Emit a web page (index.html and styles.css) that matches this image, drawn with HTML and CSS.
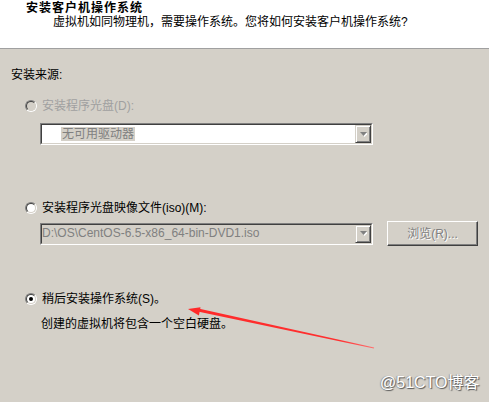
FILE: index.html
```html
<!DOCTYPE html>
<html>
<head>
<meta charset="utf-8">
<link rel="stylesheet" href="styles.css">
</head>
<body>
<div class="page">
  <div class="header">
    <div class="title">安装客户机操作系统</div>
    <div class="subtitle">虚拟机如同物理机，需要操作系统。您将如何安装客户机操作系统?</div>
  </div>
  <div class="content">
    <div class="section-label">安装来源:</div>
    <div class="options">
      <div class="row row1">
        <span class="radio"><span class="radio-inner disabled"></span></span>
        <span class="label disabled-text">安装程序光盘(D):</span>
      </div>
      <div class="combo-row combo-row1">
        <div class="combo">
          <div class="combo-in">
            <div class="combo-text"><span class="sel">无可用驱动器</span></div>
            <div class="combo-btn">
              <svg width="7" height="5" viewBox="0 0 7 5"><polygon points="1,1 8,1 4.5,5" fill="#fff"/><polygon points="0,0 7,0 3.5,4" fill="#808080"/></svg>
            </div>
          </div>
        </div>
      </div>
      <div class="row row2">
        <span class="radio"><span class="radio-inner"></span></span>
        <span class="label">安装程序光盘映像文件(iso)(M):</span>
      </div>
      <div class="combo-row combo-row2">
        <div class="combo">
          <div class="combo-in off">
            <div class="combo-text path">D:\OS\CentOS-6.5-x86_64-bin-DVD1.iso</div>
            <div class="combo-btn">
              <svg width="7" height="5" viewBox="0 0 7 5"><polygon points="1,1 8,1 4.5,5" fill="#fff"/><polygon points="0,0 7,0 3.5,4" fill="#808080"/></svg>
            </div>
          </div>
        </div>
        <div class="browse">浏览(R)...</div>
      </div>
      <div class="row row3">
        <span class="radio"><span class="radio-inner"><span class="dot"></span></span></span>
        <span class="label">稍后安装操作系统(S)。</span>
      </div>
      <div class="desc">创建的虚拟机将包含一个空白硬盘。</div>
    </div>
  </div>
  <svg class="arrow" width="489" height="402" viewBox="0 0 489 402">
    <defs>
      <linearGradient id="fade" x1="198" y1="310" x2="374" y2="348" gradientUnits="userSpaceOnUse">
        <stop offset="0" stop-color="#ff2a2a"/>
        <stop offset="0.8" stop-color="#ff3030"/>
        <stop offset="1" stop-color="#ff7070"/>
      </linearGradient>
    </defs>
    <polygon points="198.3,308.5 374.1,347.6 373.9,348.6 197.7,311.6" fill="url(#fade)"/>
    <polygon points="188,309 200.5,307.3 198.9,315.4" fill="#ff2a2a"/>
  </svg>
  <div class="watermark">@51CTO博客</div>
</div>
</body>
</html>
```
FILE: styles.css
```css
html, body {
  margin: 0;
  padding: 0;
}
body {
  background: #d4d0c8;
  font-family: "Liberation Sans", "Noto Sans CJK SC", sans-serif;
  font-size: 12px;
  color: #000;
}
.page {
  position: relative;
  width: 489px;
  height: 402px;
  overflow: hidden;
}
.header {
  height: 48px;
  background: #fff;
  border-bottom: 1px solid #a0a0a0;
  padding-top: 1px;
  box-sizing: content-box;
}
.header {
  height: 47px;
}
.title {
  margin-left: 26px;
  font-weight: bold;
  letter-spacing: 1px;
  line-height: 14px;
}
.subtitle {
  margin-left: 53px;
  line-height: 14px;
}
.content {
  padding-left: 11px;
}
.section-label {
  margin-top: 19px;
  line-height: 14px;
}
.options {
  margin-left: 14px;
}
.row {
  display: flex;
  align-items: center;
  gap: 5px;
  height: 14px;
  line-height: 14px;
}
.row1 { margin-top: 17px; }
.row2 { margin-top: 56px; }
.row3 { margin-top: 46px; }
.disabled-text {
  color: #a0a0a0;
}
.radio {
  width: 12px;
  height: 12px;
  box-sizing: border-box;
  border-radius: 50%;
  border: 1px solid;
  border-color: #808080 #fff #fff #808080;
  display: flex;
}
.radio-inner {
  width: 10px;
  height: 10px;
  box-sizing: border-box;
  border-radius: 50%;
  border: 1px solid;
  border-color: #404040 #d4d0c8 #d4d0c8 #404040;
  background: #fff;
  display: flex;
  align-items: center;
  justify-content: center;
}
.radio-inner.disabled {
  background: #d4d0c8;
}
.dot {
  width: 4px;
  height: 4px;
  border-radius: 50%;
  background: #000;
}
.combo-row {
  display: flex;
  align-items: center;
  gap: 14px;
  margin-left: 15px;
}
.combo-row1 { margin-top: 10px; }
.combo-row2 { margin-top: 6px; height: 25px; }
.combo {
  width: 333px;
  height: 22px;
  box-sizing: border-box;
  border: 1px solid;
  border-color: #808080 #fff #fff #808080;
  display: flex;
}
.combo-in {
  flex: 1;
  display: flex;
  border: 1px solid;
  border-color: #404040 #d4d0c8 #d4d0c8 #404040;
  background: #fff;
}
.combo-in.off {
  background: #d4d0c8;
}
.combo-text {
  flex: 1;
  line-height: 14px;
}
.sel {
  display: inline-block;
  margin-top: 2px;
  margin-left: 19px;
  padding: 0 1px;
  background: #d4d0c8;
  color: #808080;
  line-height: 14px;
}
.path {
  color: #808080;
  padding-top: 1px;
}
.combo-btn {
  width: 16px;
  height: 18px;
  box-sizing: border-box;
  border: 1px solid;
  border-color: #d4d0c8 #404040 #404040 #d4d0c8;
  box-shadow: inset 1px 1px #fff, inset -1px -1px #808080;
  background: #d4d0c8;
  display: flex;
  align-items: center;
  justify-content: center;
}
.browse {
  width: 91px;
  height: 25px;
  box-sizing: border-box;
  border: 1px solid;
  border-color: #fff #404040 #404040 #fff;
  box-shadow: inset -1px -1px #808080;
  background: #d4d0c8;
  color: #808080;
  text-shadow: 1px 1px #fff;
  display: flex;
  align-items: center;
  justify-content: center;
  line-height: 14px;
}
.desc {
  margin-top: 11px;
  margin-left: 16px;
  line-height: 14px;
}
.arrow {
  position: absolute;
  left: 0;
  top: 0;
  pointer-events: none;
}
.watermark {
  position: absolute;
  left: 380px;
  top: 374px;
  font-size: 16px;
  line-height: 18px;
  color: #fff;
  text-shadow: 1px 1px 1px #555, -1px 0 1px #999;
}
```
